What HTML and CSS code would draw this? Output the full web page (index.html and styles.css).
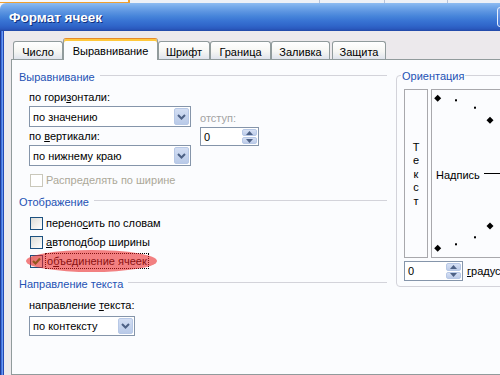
FILE: index.html
```html
<!DOCTYPE html>
<html>
<head>
<meta charset="utf-8">
<link rel="stylesheet" href="styles.css">
</head>
<body>
<div class="desk"><div class="cell"></div><div class="sheet"></div></div>
<div class="window">
  <div class="titlebar"><span class="title">Формат ячеек</span><span class="close"></span></div>
  <div class="client">
    <div class="tabs">
      <div class="tab t1">Число</div>
      <div class="tab sel t2">Выравнивание</div>
      <div class="tab t3">Шрифт</div>
      <div class="tab t4">Граница</div>
      <div class="tab t5">Заливка</div>
      <div class="tab t6">Защита</div>
    </div>
    <div class="panel">
      <div class="left">
        <div class="group g1"><span>Выравнивание</span></div>
        <div class="halign">
          <div class="selcol">
            <div class="lbl">по гори<u>з</u>онтали:</div>
            <div class="combo c1"><span>по значению</span><i class="btn"><svg width="9" height="6" viewBox="0 0 9 6"><path d="M1 1 L4.5 4.5 L8 1" stroke="#4d6185" stroke-width="2" fill="none"/></svg></i></div>
            <div class="lbl l2">по <u>в</u>ертикали:</div>
            <div class="combo c2"><span>по нижнему краю</span><i class="btn"><svg width="9" height="6" viewBox="0 0 9 6"><path d="M1 1 L4.5 4.5 L8 1" stroke="#4d6185" stroke-width="2" fill="none"/></svg></i></div>
          </div>
          <div class="indent">
            <div class="lbl dim">отступ:</div>
            <div class="spin s1"><span>0</span><i class="sbtns"><b><svg width="7" height="4" viewBox="0 0 7 4"><path d="M0 4 L3.5 0 L7 4Z" fill="#4d6185"/></svg></b><b><svg width="7" height="4" viewBox="0 0 7 4"><path d="M0 0 L3.5 4 L7 0Z" fill="#4d6185"/></svg></b></i></div>
          </div>
        </div>
        <div class="cbrow disabled r0"><span class="box"></span><span>Распределять по ширине</span></div>
        <div class="group g2"><span>Отображение</span></div>
        <div class="cbrow r1"><span class="box"></span><span>перено<u>с</u>ить по словам</span></div>
        <div class="cbrow r2"><span class="box"></span><span><u>а</u>втоподбор ширины</span></div>
        <div class="cbrow r3"><span class="box"><svg width="11" height="11" viewBox="0 0 11 11"><path d="M2 5 L4.5 7.5 L9 2.5" stroke="#21a121" stroke-width="2.2" fill="none"/></svg></span><span class="focus">о<u>б</u>ъединение ячеек</span><span class="mark"></span></div>
        <div class="group g3"><span>Направление текста</span></div>
        <div class="lbl l3">направление <u>т</u>екста:</div>
        <div class="combo c3"><span>по контексту</span><i class="btn"><svg width="9" height="6" viewBox="0 0 9 6"><path d="M1 1 L4.5 4.5 L8 1" stroke="#4d6185" stroke-width="2" fill="none"/></svg></i></div>
      </div>
      <div class="right">
        <div class="frame">
          <div class="legend">Ориентация</div>
          <div class="boxes">
            <div class="vtext"><span>Т</span><span>е</span><span>к</span><span>с</span><span>т</span></div>
            <div class="dial">
              <svg class="dots" width="80" height="167" viewBox="0 0 80 167">
                <polygon points="5.7,4.8 9.2,8.3 5.7,11.8 2.2,8.3" fill="#000"/>
                <rect x="23" y="9.3" width="2" height="2" fill="#000"/>
                <rect x="42" y="16.7" width="2" height="2" fill="#000"/>
                <polygon points="58,26.8 61.5,30.3 58,33.8 54.5,30.3" fill="#000"/>
                <polygon points="58,132.5 61.5,136 58,139.5 54.5,136" fill="#000"/>
                <rect x="42" y="146.3" width="2" height="2" fill="#000"/>
                <rect x="23" y="153.3" width="2" height="2" fill="#000"/>
                <polygon points="5.7,154.8 9.2,158.3 5.7,161.8 2.2,158.3" fill="#000"/>
                <rect x="52" y="83" width="28" height="1" fill="#000"/>
              </svg>
              <span class="caption">Надпись</span>
            </div>
          </div>
          <div class="deg">
            <div class="spin s2"><span>0</span><i class="sbtns"><b><svg width="7" height="4" viewBox="0 0 7 4"><path d="M0 4 L3.5 0 L7 4Z" fill="#4d6185"/></svg></b><b><svg width="7" height="4" viewBox="0 0 7 4"><path d="M0 0 L3.5 4 L7 0Z" fill="#4d6185"/></svg></b></i></div>
            <span class="degl"><u>г</u>радусов</span>
          </div>
        </div>
      </div>
    </div>
  </div>
</div>
</body>
</html>
```
FILE: styles.css
```css
* { box-sizing: border-box; }
html, body { margin: 0; padding: 0; }
body {
  width: 500px;
  height: 375px;
  overflow: hidden;
  background: #f1f3f8;
  font-family: "Liberation Sans", Arial, sans-serif;
  font-size: 11px;
  color: #000;
}
u { text-decoration: underline; text-underline-offset: 1px; }

.desk { height: 3px; display: flex; }
.desk .cell { width: 130px; border-right: 2px solid #f0a030; border-bottom: 1px solid #f0a030; background: #f7f8fc; }
.desk .sheet { flex: 1; background: linear-gradient(90deg, transparent 189px, #b7c3da 189px, #b7c3da 190px, transparent 190px, transparent 254px, #b7c3da 254px, #b7c3da 255px, transparent 255px, transparent 317px, #b7c3da 317px, #b7c3da 318px, transparent 318px), #eef1f7; }

.window { width: 520px; height: 372px; display: flex; flex-direction: column; }

.titlebar {
  height: 28px;
  flex: none;
  display: flex;
  align-items: center;
  justify-content: space-between;
  padding-left: 9px;
  border-radius: 6px 6px 0 0;
  background: linear-gradient(#8fbcf1 0, #79adec 3px, #5f97e2 8px, #4785da 13px, #3873d3 18px, #2f65c9 23px, #2a58bd 26px, #2147a6 28px);
}
.title {
  color: #fff;
  font-weight: bold;
  font-size: 13.5px;
  text-shadow: 1px 1px 0 #10307e;
  padding-top: 1px;
}
.close {
  width: 21px;
  height: 20px;
  margin-right: 2px;
  border: 1px solid #e8effc;
  border-radius: 3px;
  background: linear-gradient(#7aa6ea, #4276d8);
}

.client {
  flex: 1;
  display: flex;
  flex-direction: column;
  background: #ece9ec;
  padding-left: 11px;
  box-shadow: inset 1px 0 #1f3b96, inset 2px 0 #3f70e0, inset 3px 0 #6a98ee, inset 4px 0 #2248b6;
}

.tabs {
  display: flex;
  align-items: flex-end;
  height: 21px;
  margin-top: 7px;
  padding-left: 2px;
  position: relative;
  z-index: 1;
}
.tab {
  height: 18px;
  border: 1px solid #919b9c;
  border-bottom: none;
  border-radius: 3px 3px 0 0;
  background: linear-gradient(#ffffff, #f6f6f3 55%, #dfe3ec);
  display: flex;
  align-items: center;
  justify-content: center;
  padding-top: 3px;
  white-space: nowrap;
}
.tab.sel {
  height: 22px;
  margin-bottom: -1px;
  background: #fbfcfe;
  border-top: 1px solid #e68b2c;
  box-shadow: inset 0 2px 0 #ffc83c;
  padding-top: 3px;
}
.t1 { width: 50px; }
.t2 { width: 95px; }
.t3 { width: 52px; }
.t4 { width: 61px; }
.t5 { width: 59px; }
.t6 { width: 54px; margin-left: 2px; }

.panel {
  flex: 1;
  border: 1px solid #919b9c;
  background: #fbfcfe;
  padding: 10px 0 0 7px;
  display: grid;
  grid-template-columns: 368px 1fr;
  column-gap: 9px;
  align-items: start;
}

.left { display: flex; flex-direction: column; }

.group {
  height: 14px;
  display: flex;
  align-items: center;
  color: #2452b4;
  white-space: nowrap;
}
.group::after {
  content: "";
  flex: 1;
  height: 1px;
  background: #d3d3da;
  margin: 0 0 4px 5px;
}
.g2 { margin-top: 8px; }
.g3 { margin-top: 9px; }

.lbl { height: 14px; line-height: 14px; white-space: nowrap; }
.dim { color: #a3a3a3; }

.halign { display: flex; margin-top: 6px; padding-left: 10px; gap: 9px; }
.selcol { width: 162px; display: flex; flex-direction: column; }
.l2 { margin-top: 2px; }
.c1, .c2 { margin-top: 2px; }

.combo {
  height: 21px;
  border: 1px solid #8595aa;
  background: #fff;
  display: flex;
  align-items: center;
  justify-content: space-between;
  padding: 1px 1px 1px 3px;
  white-space: nowrap;
}
.combo .btn {
  width: 15px;
  align-self: stretch;
  border: 1px solid #b7c8e6;
  border-radius: 2px;
  background: linear-gradient(#d3def3, #b9cae8);
  display: flex;
  align-items: center;
  justify-content: center;
}
.c3 { width: 106px; height: 20px; margin-left: 10px; margin-top: 4px; }
.l3 { margin-left: 10px; margin-top: 7px; }

.indent { padding-top: 21px; display: flex; flex-direction: column; }
.spin {
  height: 19px;
  width: 59px;
  border: 1px solid #8595aa;
  background: #fff;
  display: flex;
  align-items: center;
  justify-content: space-between;
  padding: 1px 1px 1px 3px;
  margin-top: 2px;
}
.sbtns { width: 15px; align-self: stretch; display: flex; flex-direction: column; gap: 1px; }
.sbtns b {
  flex: 1;
  border: 1px solid #b7c8e6;
  border-radius: 2px;
  background: linear-gradient(#d6e0f4, #bccbe8);
  display: flex;
  align-items: center;
  justify-content: center;
}

.cbrow {
  height: 14px;
  display: flex;
  align-items: center;
  gap: 3px;
  margin-left: 11px;
  white-space: nowrap;
  position: relative;
}
.cbrow .box {
  width: 13px;
  height: 13px;
  border: 1px solid #1c5180;
  background: linear-gradient(135deg, #dcdcd7, #ffffff);
  display: flex;
  align-items: center;
  justify-content: center;
}
.r0 { margin-top: 7px; }
.r1 { margin-top: 7px; }
.r2, .r3 { margin-top: 5px; }
.disabled { color: #aca899; }
.disabled .box { border-color: #cac8bb; background: #fff; }
.focus { outline: 1px dotted #000; outline-offset: 0; padding: 0 1px; height: 14px; line-height: 14px; }
.mark {
  position: absolute;
  left: -4px;
  top: -4px;
  width: 131px;
  height: 22px;
  border-radius: 50%;
  background: rgba(236, 30, 30, 0.56);
}

.right { margin-top: 5px; }
.frame {
  border: 1px solid #d3d3da;
  border-radius: 4px;
  padding-bottom: 5px;
}
.legend {
  display: block;
  width: max-content;
  margin: -7px 0 0 4px;
  padding: 0 1px;
  height: 14px;
  line-height: 14px;
  background: #fbfcfe;
  color: #2452b4;
}
.boxes { display: flex; gap: 3px; padding-left: 7px; margin-top: 6px; height: 169px; }
.vtext {
  width: 24px;
  border: 1px solid #a8a8ac;
  display: flex;
  flex-direction: column;
  align-items: center;
  justify-content: center;
  line-height: 13.5px;
  padding-top: 2px;
}
.dial {
  flex: 1;
  border: 1px solid #a8a8ac;
  position: relative;
}
.dots { position: absolute; left: 0; top: 0; }
.caption { position: absolute; left: 4px; top: 78px; line-height: 14px; }
.deg { display: flex; align-items: center; padding-left: 7px; margin-top: 3px; gap: 4px; white-space: nowrap; }
.s2 { height: 20px; margin-top: 0; }
```
